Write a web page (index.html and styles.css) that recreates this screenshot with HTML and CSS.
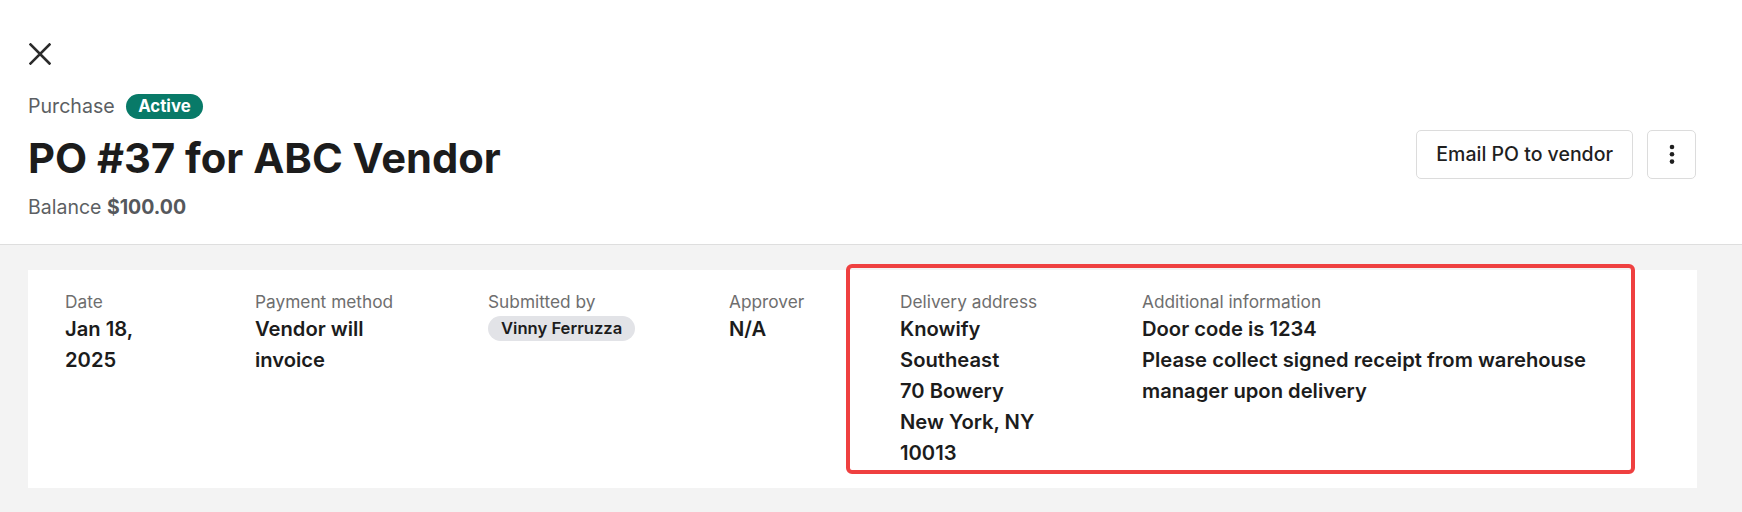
FILE: index.html
```html
<!DOCTYPE html>
<html lang="en">
<head>
<meta charset="utf-8">
<title>PO #37 for ABC Vendor</title>
<link rel="stylesheet" href="styles.css">
</head>
<body>
<header class="page-header">
  <button class="close-btn" type="button" aria-label="Close">
    <svg width="22" height="22" viewBox="0 0 22 22" fill="none" stroke="#2b2b2b" stroke-width="2.6" stroke-linecap="square">
      <path d="M1.5 1.5 L20.5 20.5 M20.5 1.5 L1.5 20.5"/>
    </svg>
  </button>
  <div class="header-row">
    <div class="header-main">
      <div class="meta">
        <span class="meta-type">Purchase</span>
        <span class="badge">Active</span>
      </div>
      <h1 class="title">PO #37 for ABC Vendor</h1>
      <div class="balance">Balance <strong>$100.00</strong></div>
    </div>
    <div class="actions">
      <button class="btn" type="button">Email PO to vendor</button>
      <button class="btn btn-icon" type="button" aria-label="More">
        <svg width="6" height="20" viewBox="0 0 6 20" fill="#1f1f1f">
          <circle cx="3" cy="3" r="2.3"/>
          <circle cx="3" cy="10.3" r="2.3"/>
          <circle cx="3" cy="17.6" r="2.3"/>
        </svg>
      </button>
    </div>
  </div>
</header>
<main class="page-body">
  <section class="card">
    <dl class="details">
      <div class="field">
        <dt class="label">Date</dt>
        <dd class="value">Jan 18, 2025</dd>
      </div>
      <div class="field">
        <dt class="label">Payment method</dt>
        <dd class="value">Vendor will invoice</dd>
      </div>
      <div class="field">
        <dt class="label">Submitted by</dt>
        <dd class="value"><span class="pill">Vinny Ferruzza</span></dd>
      </div>
      <div class="field">
        <dt class="label">Approver</dt>
        <dd class="value">N/A</dd>
      </div>
      <div class="field">
        <dt class="label">Delivery address</dt>
        <dd class="value">Knowify Southeast<br>70 Bowery<br>New York, NY 10013</dd>
      </div>
      <div class="field">
        <dt class="label">Additional information</dt>
        <dd class="value">Door code is 1234<br>Please collect signed receipt from warehouse manager upon delivery</dd>
      </div>
    </dl>
    <div class="highlight" aria-hidden="true"></div>
  </section>
</main>
</body>
</html>
```

FILE: styles.css
```css
* { box-sizing: border-box; }

html, body {
  margin: 0;
  padding: 0;
  height: 100%;
}

body {
  font-family: Inter, "Noto Sans", sans-serif;
  color: #1c1c1c;
  background: #f3f3f3;
  display: flex;
  flex-direction: column;
}

/* ---------- header ---------- */
.page-header {
  background: #ffffff;
  border-bottom: 1px solid #dedede;
  padding: 43px 46px 25px 28px;
}

.close-btn {
  display: block;
  width: 22px;
  height: 22px;
  padding: 0;
  margin: 0 0 0 1px;
  border: 0;
  background: none;
  cursor: pointer;
}

.close-btn svg { display: block; }

.header-row {
  display: flex;
  align-items: center;
  justify-content: space-between;
  margin-top: 29px;
}

.header-main {
  display: flex;
  flex-direction: column;
}

.meta {
  display: flex;
  align-items: center;
  gap: 11px;
  height: 25px;
}

.meta-type {
  font-size: 19.6px;
  line-height: 25px;
  color: #5c5f63;
}

.badge {
  display: inline-flex;
  align-items: center;
  height: 25px;
  padding: 0 12.5px;
  border-radius: 13px;
  background: #087a68;
  color: #ffffff;
  font-size: 16.8px;
  font-weight: 700;
  line-height: 25px;
}

.title {
  margin: 14px 0 0;
  font-size: 41.7px;
  line-height: 50px;
  font-weight: 700;
  color: #1c1c1c;
}

.balance {
  margin-top: 12px;
  font-size: 19.5px;
  line-height: 24px;
  color: #5c5f63;
}

.balance strong {
  font-weight: 700;
  color: #55585c;
}

.actions {
  display: flex;
  gap: 14px;
  margin-bottom: 5px;
}

.btn {
  height: 49px;
  padding: 0 19px;
  border: 1px solid #dcdcdc;
  border-radius: 5px;
  background: #ffffff;
  font-family: inherit;
  font-size: 19.5px;
  font-weight: 500;
  color: #1f1f1f;
  cursor: pointer;
}

.btn-icon {
  width: 49px;
  padding: 0;
  display: flex;
  align-items: center;
  justify-content: center;
}

.btn-icon svg { display: block; }

/* ---------- body ---------- */
.page-body {
  flex: 1;
  padding: 25px 45px 24px 28px;
}

.card {
  position: relative;
  background: #ffffff;
  padding: 20px 20px 20px 37px;
}

.details {
  display: grid;
  grid-template-columns: 110px 153px 161px 91px 162px 470px;
  column-gap: 80px;
  margin: 0;
}

.field { min-width: 0; }

.label {
  font-size: 17.3px;
  line-height: 23px;
  color: #6e6e6e;
}

.value {
  margin: 0;
  font-size: 20.2px;
  line-height: 31px;
  font-weight: 600;
  color: #1c1c1c;
}

.pill {
  display: inline-block;
  margin-top: 3px;
  height: 25px;
  padding: 0 13px;
  border-radius: 13px;
  background: #e2e3e7;
  font-size: 16.6px;
  line-height: 25px;
  font-weight: 600;
  vertical-align: top;
  white-space: nowrap;
}

/* annotation overlay around delivery + additional info */
.highlight {
  position: absolute;
  left: 818px;
  top: -6px;
  width: 789px;
  height: 210px;
  border: 4px solid #ef4040;
  border-radius: 6px;
  pointer-events: none;
}
```
